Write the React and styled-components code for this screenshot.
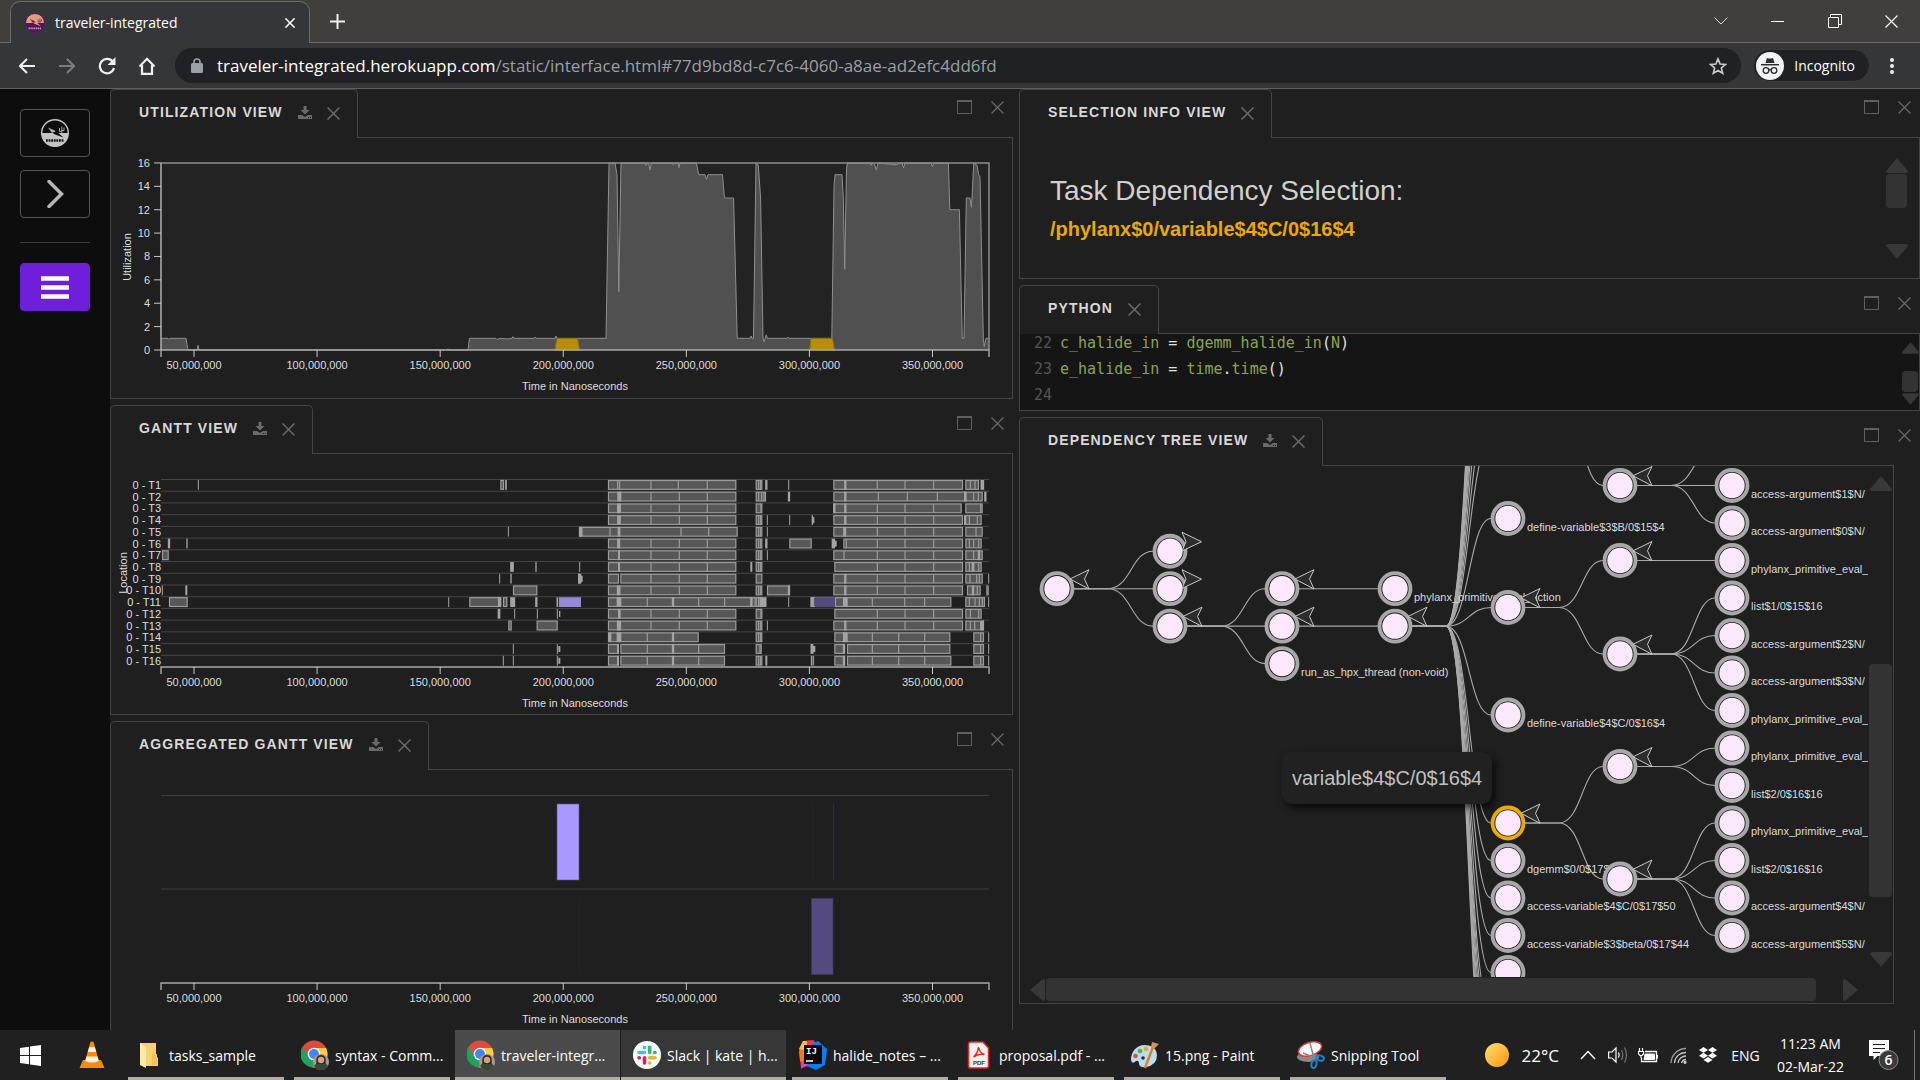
import React from "react";
import styled, { createGlobalStyle, css } from "styled-components";

const GlobalStyle = createGlobalStyle`
  * { box-sizing: border-box; }
  html, body { margin: 0; height: 100%; }
  body {
    background: #1f1f1f;
    color: #d0d0d0;
    font-family: "Liberation Sans", Arial, sans-serif;
    overflow: hidden;
  }
  button { font: inherit; color: inherit; background: none; border: 0; padding: 0; margin: 0; }
  svg { display: block; flex: none; }
`;

const uiFont = css`
  font-family: "Open Sans", "Noto Sans", sans-serif;
`;

/* ---------- page shell ---------- */

const Screen = styled.div`
  display: flex;
  flex-direction: column;
  height: 100vh;
`;

const Workspace = styled.main`
  flex: 1;
  min-height: 0;
  display: grid;
  grid-template-columns: 110px minmax(0, 1fr);
  overflow: hidden;
`;

const Panes = styled.div`
  display: grid;
  grid-template-columns: minmax(0, 903fr) minmax(0, 901fr);
  column-gap: 6px;
  min-height: 0;
  overflow: hidden;
`;

const Column = styled.div`
  display: flex;
  flex-direction: column;
  gap: 6px;
  min-height: 0;
`;

/* ---------- browser chrome ---------- */

const TabStrip = styled.header`
  ${uiFont}
  display: flex;
  align-items: stretch;
  height: 43px;
  padding-left: 10px;
  background: #403f3c;
  border-bottom: 1px solid #6b6b6a;
`;

const BrowserTab = styled.div`
  display: flex;
  align-items: center;
  width: 300px;
  margin: 1px 0 -1px;
  padding: 0 14px 0 14px;
  background: #35363a;
  border: 1px solid #6b6b6a;
  border-bottom: 0;
  border-radius: 10px 10px 0 0;
  color: #fff;
  font-size: 14px;
  gap: 10px;
`;

const TabName = styled.span`
  flex: 1;
  white-space: nowrap;
`;

const IconButton = styled.button`
  display: flex;
  align-items: center;
  justify-content: center;
  width: ${(p) => p.$w || 40}px;
`;

const StripSpace = styled.div`
  flex: 1;
`;

const Toolbar = styled.div`
  ${uiFont}
  display: flex;
  align-items: center;
  height: 46px;
  padding: 0 6px 0 7px;
  background: #35363a;
  border-bottom: 1px solid #5f6062;
`;

const AddressBar = styled.div`
  flex: 1;
  min-width: 0;
  display: flex;
  align-items: center;
  gap: 14px;
  height: 35px;
  margin: 0 12px 0 8px;
  padding: 0 14px 0 16px;
  border-radius: 18px;
  background: #202124;
`;

const Url = styled.div`
  flex: 1;
  min-width: 0;
  overflow: hidden;
  white-space: nowrap;
  font-size: 17px;
  color: #9aa0a6;
  outline: 0;
`;

const Host = styled.span`
  color: #fff;
`;

const Profile = styled.button`
  display: flex;
  align-items: center;
  gap: 10px;
  height: 33px;
  padding: 0 14px 0 2px;
  border: 1px solid #3a3b3f;
  border-radius: 17px;
  background: #202124;
  color: #fff;
  font-size: 14px;
`;

/* ---------- side bar ---------- */

const Sidebar = styled.nav`
  display: flex;
  flex-direction: column;
  align-items: center;
  padding-top: 20px;
  background: #0d0d0d;
`;

const SideButton = styled.button`
  display: flex;
  align-items: center;
  justify-content: center;
  width: 70px;
  height: 48px;
  margin-bottom: 13px;
  border: 1px solid ${(p) => (p.$primary ? "#6f1edb" : "#555")};
  border-radius: 4px;
  background: ${(p) => (p.$primary ? "#6f1edb" : "transparent")};
`;

const Divider = styled.hr`
  width: 70px;
  margin: 11px 0 20px;
  border: 0;
  border-top: 1px solid #3a3a3a;
`;

/* ---------- panels ---------- */

const PanelBox = styled.section`
  flex: none;
`;

const PanelHeader = styled.div`
  display: flex;
  align-items: flex-start;
  justify-content: space-between;
  height: 48px;
  padding-right: 9px;
`;

const PanelTab = styled.div`
  position: relative;
  z-index: 1;
  display: flex;
  align-items: center;
  gap: 15px;
  height: 49px;
  padding: 0 17px 3px 28px;
  border: 1px solid #454545;
  border-bottom: 0;
  border-radius: 5px 5px 0 0;
  background: #1f1f1f;
`;

const PanelTitle = styled.h2`
  margin: 0;
  padding-bottom: 2px;
  font-size: 14px;
  line-height: 16px;
  font-weight: 700;
  letter-spacing: 0.08em;
  text-transform: uppercase;
  white-space: nowrap;
  color: #d8d8d8;
`;

const CloseTab = styled.button`
  padding-top: 2px;
`;

const PanelTools = styled.div`
  display: flex;
  gap: 19px;
  padding-top: 11px;
`;

const PanelBody = styled.div`
  height: ${(p) => (p.$h ? p.$h + "px" : "auto")};
  margin-right: ${(p) => p.$inset || 0}px;
  border: 1px solid #454545;
  background: ${(p) => p.$bg || "#1f1f1f"};
`;

const Drawing = styled.svg`
  width: 100%;
  height: auto;
  font-family: "Liberation Sans", Arial, sans-serif;
  font-size: 11px;
`;

/* ---------- scroll bars ---------- */

const VBar = styled.div`
  display: flex;
  flex-direction: column;
  align-items: center;
  width: ${(p) => p.$w}px;
  padding: ${(p) => p.$pad};
`;

const HBar = styled.div`
  display: flex;
  align-items: center;
  height: 26px;
  padding: 0 10px 1px 10px;
`;

const Space = styled.div`
  flex: ${(p) => p.$grow} 0 0;
`;

const Thumb = styled.div`
  flex: ${(p) => p.$grow} 0 0;
  align-self: stretch;
  margin: 1px;
  border-radius: 4px;
  background: #333;
`;

/* ---------- selection info ---------- */

const SelectionBody = styled(PanelBody)`
  display: flex;
  justify-content: space-between;
`;

const SelectionText = styled.div`
  padding: 35px 0 0 30px;
`;

const SelectionTitle = styled.h1`
  margin: 0;
  font-size: 28px;
  line-height: 36px;
  font-weight: 400;
  color: #d0d0d0;
`;

const SelectionName = styled.p`
  margin: 0;
  font-size: 20px;
  line-height: 40px;
  font-weight: 700;
  color: #eaa905;
`;

/* ---------- code ---------- */

const CodeBody = styled(PanelBody)`
  display: flex;
  justify-content: space-between;
  overflow: hidden;
`;

const CodeLines = styled.pre`
  margin: -4px 0 0;
  padding: 0 0 0 14px;
  font-family: "DejaVu Sans Mono", monospace;
  font-size: 15px;
  line-height: 26px;
  color: #e0e0e0;
`;

const LineNo = styled.span`
  display: inline-block;
  width: 26px;
  color: #565656;
`;

const Name = styled.span`
  color: #8ba453;
`;

/* ---------- dependency tree ---------- */

const TreeBody = styled(PanelBody)`
  display: grid;
  grid-template-columns: minmax(0, 1fr) 25px;
  grid-template-rows: auto 26px;
`;

const Canvas = styled.div`
  position: relative;
`;

const Tooltip = styled.div`
  position: absolute;
  left: 262px;
  top: 286px;
  padding: 0 10px;
  border-radius: 10px;
  background: #212121;
  box-shadow: 3px 4px 8px rgba(0, 0, 0, 0.7);
  font-size: 20px;
  line-height: 52px;
  color: #c0c0c0;
`;

/* ---------- task bar ---------- */

const Taskbar = styled.footer`
  ${uiFont}
  flex: none;
  display: flex;
  height: 50px;
  background: #202020;
  color: #fff;
  font-size: 14px;
`;

const Task = styled.button`
  position: relative;
  display: flex;
  align-items: center;
  gap: 6px;
  width: ${(p) => (p.$bg ? 165 : 166)}px;
  margin-right: ${(p) => (p.$bg ? 1 : 0)}px;
  padding-left: 12px;
  white-space: nowrap;
  background: ${(p) => p.$bg || "transparent"};
  &::after {
    content: "";
    position: absolute;
    bottom: 0;
    height: 3px;
    left: ${(p) => (p.$bg ? 0 : 5)}px;
    right: ${(p) => (p.$bg ? 0 : 5)}px;
    background: #b3ada5;
  }
`;

const Tray = styled.div`
  display: flex;
  align-items: stretch;
  margin-left: auto;
`;

const Weather = styled.button`
  display: flex;
  align-items: center;
  gap: 13px;
  padding-right: 14px;
  font-size: 17px;
`;

const Clock = styled.time`
  width: 85px;
  padding-top: 2px;
  text-align: center;
  line-height: 23px;
  white-space: nowrap;
`;

const Language = styled.button`
  width: 45px;
`;

const ShowDesktop = styled.button`
  width: 6px;
  border-left: 1px solid #777;
`;

/* ---------- small icons ---------- */

const Cross = ({ size = 13, color = "#6a6a6a", w = 1.5 }) => (
  <svg width={size} height={size} viewBox="0 0 13 13" aria-hidden="true">
    <path d="M.5 .5 12.5 12.5M12.5 .5 .5 12.5" stroke={color} strokeWidth={w} fill="none" />
  </svg>
);

const Download = () => (
  <svg width="14" height="13" viewBox="0 0 14 13" aria-hidden="true">
    <path d="M5.5 0h3v4h3L7 8.5 2.5 4h3z" fill="#6a6a6a" />
    <path d="M0 9h4l3 2 3-2h4v4H0z" fill="#6a6a6a" />
    <path d="M10 11.5h1M12 11.5h1" stroke="#1f1f1f" />
  </svg>
);

const Maximize = () => (
  <svg width="15" height="14" viewBox="0 0 15 14" aria-hidden="true">
    <path d="M.5 1H14.5V13.5H.5z" fill="none" stroke="#606060" />
    <path d="M0 1H15" stroke="#606060" strokeWidth="2" />
  </svg>
);

const arrows = {
  up: "M11 0 22 13Q22 15 20 15H2Q0 15 0 13z",
  down: "M11 15 22 2Q22 0 20 0H2Q0 0 0 2z",
};

const Arrow = ({ dir, size = 22 }) => {
  if (dir === "left" || dir === "right") {
    return (
      <svg width="15" height="22" viewBox="0 0 15 22" aria-hidden="true">
        <path d={dir === "left" ? "M0 11 13 0Q15 0 15 2V20Q15 22 13 22z" : "M15 11 2 0Q0 0 0 2V20Q0 22 2 22z"} fill="#383838" />
      </svg>
    );
  }
  return (
    <svg width={size} height={Math.round((size * 15) / 22)} viewBox="0 0 22 15" aria-hidden="true">
      <path d={arrows[dir]} fill="#383838" />
    </svg>
  );
};

const TravelerLogo = ({ size, sky, ground, ink }) => (
  <svg width={size} height={size} viewBox="0 0 28 28" aria-hidden="true">
    <circle cx="14" cy="14" r="13.3" fill={sky} stroke={ground} strokeWidth="1.4" />
    <path d="M.7 14H27.3A13.3 13.3 0 0 1 .7 14z" fill={ground} />
    <path d="M7 8.5 14.5 12 14 14.2 11 14z" fill={ink} />
    <path d="M11 13.5 15.5 12.5 22.5 18.5 14 15.5z" fill={sky} />
    <path d="M18.5 9V12.5H20.5M20.8 7.500V14M20.8 11.5H23V8.5" stroke={ink} fill="none" strokeWidth=".9" />
    <path d="M5 21.5h18" stroke={sky} strokeWidth="2.4" strokeDasharray="1.8 .8" />
  </svg>
);

/* ---------- charts ---------- */

const PLOT_W = 828;
const TICKS = [50, 100, 150, 200, 250, 300, 350];
const timeX = (t) => 33 + ((t - 50) * 738.5) / 300;

const TimeAxis = ({ y }) => (
  <g transform={`translate(0 ${y})`}>
    <path d={`M0 7V0H${PLOT_W}V7`} fill="none" stroke="#a9a9a9" strokeWidth="1.4" />
    {TICKS.map((t) => (
      <g key={t} transform={`translate(${timeX(t)} 0)`}>
        <path d="M0 0V7" stroke="#c8c8c8" />
        <text y="19" textAnchor="middle" fill="#dedede">{`${t},000,000`}</text>
      </g>
    ))}
    <text x="414" y="40" textAnchor="middle" fill="#dedede">Time in Nanoseconds</text>
  </g>
);

const USAGE = [
  [161, 1], [168, 1], [169, 0.9], [170, 1], [186, 1], [188, 0], [197, 0], [198, 0.4], [199, 0], [447, 0], [448, 0.1], [449, 0],
  [468, 0], [469.5, 1], [496, 1], [497, 0.9], [500, 1], [508, 0.95], [512, 1], [513, 1.15], [514, 1], [534, 1], [535, 1.1], [536, 1],
  [555, 1], [556, 1.2], [557, 1], [606, 1], [609, 16], [615, 16], [617, 15], [618.8, 5], [621, 16], [645, 16], [646, 15.8], [647, 16],
  [648.6, 16], [650, 15.4], [651.4, 16], [672, 16], [673, 15.85], [674, 16], [678, 16], [679, 15.6], [680, 16], [696.4, 16], [698.7, 15],
  [705, 15], [706.5, 14.6], [708, 15], [722.5, 15], [724.4, 13], [733.6, 13], [737.2, 1], [750, 1], [751, 1.2], [752, 1], [753.5, 1],
  [756, 16], [758.3, 15.8], [760.6, 13], [763, 1], [764, 0.7], [766.2, 1.3], [767.5, 1], [787, 1], [788, 1.1], [789, 1], [831.8, 1],
  [834, 14], [835, 15], [842, 15], [843.3, 13], [844.7, 6.9], [846.5, 15.5], [847.4, 16], [870, 16], [871, 15.8], [872, 16],
  [874.5, 15.9], [876.3, 15.4], [878, 16], [896, 15.85], [900, 16], [902, 16], [903.5, 15.6], [905, 16], [931, 16], [932.4, 15.7],
  [934, 16], [948.4, 16], [949.8, 12], [959.4, 12], [962.2, 1], [964, 1], [966.3, 13], [970, 13], [971.4, 12.2], [972.3, 13.5],
  [973.7, 16], [977, 15.8], [978.7, 15], [980, 14.8], [983.3, 1], [984.2, 0.3], [986, 1], [989, 1],
];

const usageY = (v) => 187 - v * 11.69;
const usageLine = USAGE.map(([x, v]) => `${(x - 161).toFixed(1)} ${usageY(v).toFixed(1)}`).join("L");

const UtilizationChart = () => (
  <Drawing viewBox="0 0 901 260" role="img" aria-label="Utilization over time">
    <g transform="translate(50 25)">
      <rect width={PLOT_W} height="187" fill="#232323" />
      <path d={`M0 187L${usageLine}L828 187z`} fill="#505050" />
      <path d={`M${usageLine}`} fill="none" stroke="#8f8f8f" />
      <path d={`M0 0H${PLOT_W}V187`} fill="none" stroke="#8d8d8d" strokeWidth="1.5" />
      <path d="M394 187L396 175.5H416.5L418.5 187z" fill="#b88c0e" stroke="#94700c" />
      <path d="M648.8 187L650 175.5H671.5L673.5 187z" fill="#b88c0e" stroke="#94700c" />
      <path d="M0 0V187" stroke="#b0b0b0" strokeWidth="1.5" />
      {[0, 2, 4, 6, 8, 10, 12, 14, 16].map((v) => (
        <g key={v} transform={`translate(0 ${usageY(v)})`}>
          <path d="M-7 0H0" stroke="#c8c8c8" />
          <text x="-11" y="4" textAnchor="end" fill="#dedede">{v}</text>
        </g>
      ))}
      <text transform="translate(-30 94) rotate(-90)" textAnchor="middle" fill="#dedede">Utilization</text>
      <TimeAxis y={187} />
    </g>
  </Drawing>
);

/* Each row holds spans [start, end, ...dividers] and marks [centre, width],
   kept in thirds of a chart unit; the early half and the late half have their own zero. */
const FIRST = [144, 529, 177, 273, 358, 442];
const SECOND = [820, 1209, 856, 952, 1035, 1121];
const SECOND_B = [823, 1209, 952, 1035, 1121];
const BURST = [587, 607, 596, 602];
const ROWS = [
  { em: [[295, 3], [1218, 5]], eb: [[1201, 1212]], lb: [[144, 529, 173, 179, 273, 355, 442], BURST, SECOND, [1216, 1257, 1231, 1245]], lm: [[619, 7], [686, 3], [856, 7], [1267, 11]] },
  { lb: [FIRST, [587, 618, 596, 605, 612], [820, 1268, 856, 955, 1042, 1132, 1216, 1241, 1255]], lm: [[178, 12], [687, 7], [856, 7], [1216, 8], [1276, 7]] },
  { lb: [FIRST, [587, 607, 603], [820, 1205, 856, 952, 1035, 1121], [1216, 1268, 1262]], lm: [[177, 12], [823, 7], [856, 7]] },
  { lb: [FIRST, BURST, SECOND, [1216, 1265, 1228, 1252]], lm: [[177, 11], [622, 3], [689, 3], [757, 4], [760, 6, 1], [856, 7], [1215, 6]] },
  { em: [[1225, 3], [1438, 3]], lb: [[58, 533, 66, 150, 177, 363, 446], BURST, SECOND, [1216, 1268, 1248]], lm: [[62, 8], [177, 8], [622, 3], [854, 9]] },
  { em: [[207, 7], [261, 4]], lb: [FIRST, BURST, [688, 755], [850, 1209, 859, 952, 1035, 1121], [1216, 1265, 1228, 1241, 1256]], lm: [[176, 9], [619, 7], [820, 10], [826, 8, 1]] },
  { eb: [[186, 206]], lb: [FIRST, BURST, [820, 1209, 852, 952, 1035, 1121], [1216, 1268, 1241, 1257]], lm: [[177, 6], [622, 3], [1257, 7]] },
  { em: [[1236, 11], [1308, 4]], lb: [FIRST, BURST, SECOND_B, [1216, 1265, 1228, 1239, 1256]], lm: [[59, 3], [177, 6], [574, 6], [1239, 8]] },
  { em: [[1199, 3], [1233, 4], [1437, 6]], lb: [[144, 177], [181, 529, 273, 358, 442], [587, 607], SECOND, [1216, 1268, 1230, 1250, 1258]], lm: [[59, 10], [64, 8, 1], [856, 7], [1286, 3]] },
  { em: [[187, 3], [259, 6]], eb: [[1239, 1312]], lb: [FIRST, BURST, [621, 689], SECOND, [1221, 1262, 1239, 1252], [1279, 1286]], lm: [[176, 11], [687, 7], [856, 7], [1239, 7]] },
  { em: [[1046, 3], [1199, 10], [1238, 15], [1309, 7], [1372, 5]], eb: [[207, 263], [1108, 1203], [1209, 1222]], lb: [[144, 587, 177, 262, 339, 416, 494, 575], [587, 607, 596], [752, 825, 760], [825, 1174, 856, 937, 1034, 1094], [1216, 1275, 1228, 1245, 1258, 1267]], lm: [[177, 14], [339, 7], [574, 7], [609, 21], [686, 3], [756, 8], [856, 14], [1286, 3]] },
  { em: [[1197, 8], [1244, 3], [1312, 3], [1372, 3], [1379, 4, 1]], lb: [FIRST, [587, 607, 603], SECOND_B, [1216, 1265, 1231, 1256]], lm: [[178, 8]] },
  { eb: [[1225, 1235], [1310, 1373]], lb: [FIRST, BURST, SECOND, [1216, 1272, 1231, 1244, 1262]], lm: [[177, 13], [622, 3], [856, 7], [1267, 9]] },
  { lb: [[144, 416, 177, 262, 339], BURST, [823, 1171, 856, 937, 1016, 1094], [1240, 1272, 1262]], lm: [[150, 8], [177, 14], [339, 7], [856, 14], [1286, 3]] },
  { em: [[1240, 3], [1372, 3], [1378, 6, 1]], lb: [[144, 177], [181, 495, 262, 339, 416], [587, 605, 600], [823, 855], [861, 1171, 937, 1016, 1094], [1240, 1272, 1262]], lm: [[174, 6], [339, 7], [756, 9], [762, 8, 1], [852, 7], [1286, 3]] },
  { em: [[1210, 3], [1240, 3], [1372, 3], [1378, 6, 1]], lb: [[144, 177], [181, 495, 262, 339, 416], BURST, [823, 855], [861, 1174, 937, 1016, 1094], [1240, 1272, 1262]], lm: [[174, 6], [339, 7], [619, 6], [755, 5], [761, 3], [852, 7], [1286, 3]] },
];

const ROW_H = 11.72;
const early = (u) => u / 3 - 61;
const late = (u) => u / 3 + 399;

const Span = ({ at, data }) => {
  const [a, b, ...cuts] = data;
  return (
    <g stroke="#9c9c9c" strokeWidth="1.2">
      <rect x={at(a) + 0.5} y="1.5" width={at(b) - at(a) - 1} height="8.8" fill="#575757" />
      {cuts.map((c) => <path key={c} d={`M${at(c)} 1.5V10.3`} />)}
    </g>
  );
};

const Mark = ({ at, data: [c, w, short] }) => (
  <rect x={at(c) - w / 6} y={short ? 3 : 1} width={w / 3} height={short ? 6 : 9.8} fill="#a4a4a4" />
);

const GanttChart = () => (
  <Drawing viewBox="0 0 901 260" role="img" aria-label="Tasks by location over time">
    <g transform="translate(50 25)">
      {ROWS.map((row, i) => (
        <g key={i} transform={`translate(0 ${i * ROW_H})`}>
          <path d={`M0 .5H${PLOT_W}`} stroke="#464646" />
          <text x="0" y="10" textAnchor="end" fill="#dedede">{`0 - T${i + 1}`}</text>
          {(row.eb || []).map((d, k) => <Span key={k} at={early} data={d} />)}
          {(row.em || []).map((d, k) => <Mark key={k} at={early} data={d} />)}
          {(row.lb || []).map((d, k) => <Span key={k} at={late} data={d} />)}
          {(row.lm || []).map((d, k) => <Mark key={k} at={late} data={d} />)}
          {i === 10 && <rect x="398" y="1" width="22" height="9.8" fill="#9688d8" />}
          {i === 10 && <rect x="654" y="1" width="20" height="9.8" fill="#554a80" />}
        </g>
      ))}
      <text transform="translate(-34 94) rotate(-90)" textAnchor="middle" fill="#dedede">Location</text>
      <TimeAxis y={188} />
    </g>
  </Drawing>
);

const AggregatedChart = () => (
  <Drawing viewBox="0 0 901 260" role="img" aria-label="Aggregated tasks over time">
    <g transform="translate(50 25)">
      <path d={`M0 .5H${PLOT_W}M0 94H${PLOT_W}`} stroke="#3f3f3f" />
      <rect x="396" y="9" width="22" height="76" fill="#a898ff" stroke="#5c5392" strokeWidth=".6" />
      <rect x="650.5" y="103.5" width="21.5" height="76" fill="#554a80" stroke="#403960" strokeWidth=".6" />
      <path d="M672.5 9V85" stroke="#302d3e" />
      <path d="M418.5 104V179M651.5 9V85" stroke="#24232a" />
      <TimeAxis y={188} />
    </g>
  </Drawing>
);

/* ---------- dependency tree drawing ---------- */

const COL = [36, 149, 261, 374, 487, 599, 711];
const step = (n) => 121.7 + n * 37.45;
const leaf = (i) => 18.5 + i * 37.5;
const NODES = [
  { c: 0, y: step(0), open: 1 },
  { c: 1, y: step(-1), open: -1 },
  { c: 1, y: step(0), open: -1 },
  { c: 1, y: step(1), open: 1 },
  { c: 2, y: step(0), open: 1 },
  { c: 2, y: step(1), open: 1 },
  { c: 2, y: step(2), label: "run_as_hpx_thread (non-void)" },
  { c: 3, y: step(0), label: "phylanx_primitive_eval_action" },
  { c: 3, y: step(1), open: 1 },
  { c: 4, y: 51.5, label: "define-variable$3$B/0$15$4" },
  { c: 4, y: 140.5, open: 1 },
  { c: 4, y: 248, label: "define-variable$4$C/0$16$4" },
  { c: 4, y: 356, open: 1, picked: true },
  { c: 4, y: 393.5, label: "dgemm$0/0$17$11" },
  { c: 4, y: 431, label: "access-variable$4$C/0$17$50" },
  { c: 4, y: 468.5, label: "access-variable$3$beta/0$17$44" },
  { c: 4, y: 505.5, label: "access-variable$2$B/0$17$41" },
  { c: 5, y: 18.5, open: 1 },
  { c: 5, y: 93.5, open: 1 },
  { c: 5, y: 187, open: 1 },
  { c: 5, y: 299.5, open: 1 },
  { c: 5, y: 412, open: 1 },
  ...[
    "access-argument$1$N/", "access-argument$0$N/", "phylanx_primitive_eval_", "list$1/0$15$16",
    "access-argument$2$N/", "access-argument$3$N/", "phylanx_primitive_eval_", "phylanx_primitive_eval_",
    "list$2/0$16$16", "phylanx_primitive_eval_", "list$2/0$16$16", "access-argument$4$N/", "access-argument$5$N/",
  ].map((label, i) => ({ c: 6, y: leaf(i), label })),
];

const LINKS = [
  [0, step(0), step(-1)], [0, step(0), step(0)], [0, step(0), step(1)],
  [1, step(1), step(0)], [1, step(1), step(1)], [1, step(1), step(2)],
  [2, step(0), step(0)], [2, step(1), step(1)],
  ...[51.5, 140.5, 248, 356, 393.5, 431, 468.5, 505.5, 543, 562, 581, 600, 618, 637, 656,
    -24, -61, -99, -136, -165, -190, -211, -232, -253, -274, -293].map((y) => [3, step(1), y]),
  [4, -60, 18.5], [4, 140.5, 93.5], [4, 140.5, 187], [4, 356, 299.5], [4, 356, 412],
  [5, 18.5, -19], [5, 18.5, leaf(0)], [5, 18.5, leaf(1)], [5, 93.5, leaf(2)],
  [5, 187, leaf(3)], [5, 187, leaf(4)], [5, 187, leaf(5)], [5, 187, leaf(6)],
  [5, 299.5, leaf(7)], [5, 299.5, leaf(8)],
  [5, 412, leaf(9)], [5, 412, leaf(10)], [5, 412, leaf(11)], [5, 412, leaf(12)],
];

const linkPath = ([c, y0, y1]) => {
  const x = COL[c];
  const end = COL[c + 1] - 17;
  const mid = x + 74;
  return `M${x + 17} ${y0}H${x + 51}C${mid} ${y0} ${mid} ${y1} ${end} ${y1}`;
};

const Node = ({ node }) => (
  <g transform={`translate(${COL[node.c]} ${node.y})`}>
    <circle r="15.5" fill="#1f1f1f" stroke={node.picked ? "#eaa905" : "#a8a8a8"} strokeWidth="3.8" />
    <circle r="12.7" fill="#fde8ff" />
    {node.open === 1 && <path d="M13 -9.7 32 -19 27.5 -9.7 32 .3z" fill="#2c2c2c" stroke="#c8c8c8" />}
    {node.open === -1 && <path d="M12 -19 31.5 -9.5 12 -.3 16 -9.5z" fill="#2c2c2c" stroke="#c8c8c8" />}
  </g>
);

const DependencyTree = () => (
  <Drawing viewBox="0 0 848 511" role="img" aria-label="Dependency tree">
    <g transform="translate(1 1)">
      <g fill="none" stroke="#aaa" strokeWidth="1.1">
        {LINKS.map((l, i) => <path key={i} d={linkPath(l)} />)}
      </g>
      <g fill="#dadada">
        {NODES.filter((n) => n.label).map((n, i) => (
          <text key={i} x={COL[n.c] + 19} y={n.y + 12}>{n.label}</text>
        ))}
      </g>
      {NODES.map((n, i) => <Node key={i} node={n} />)}
    </g>
  </Drawing>
);

/* ---------- panel ---------- */

const Panel = ({ title, download, children }) => (
  <PanelBox>
    <PanelHeader>
      <PanelTab>
        <PanelTitle>{title}</PanelTitle>
        {download && <button aria-label="Download"><Download /></button>}
        <CloseTab aria-label={`Close ${title}`}><Cross /></CloseTab>
      </PanelTab>
      <PanelTools>
        <button aria-label="Maximize"><Maximize /></button>
        <button aria-label="Close"><Cross w={1.2} /></button>
      </PanelTools>
    </PanelHeader>
    {children}
  </PanelBox>
);

/* ---------- task bar icons ---------- */

const ChromeIcon = () => (
  <svg width="28" height="30" viewBox="0 0 28 30" aria-hidden="true">
    <circle cx="13" cy="14" r="13.5" fill="#dd4b3e" />
    <path d="M1.3 7.3 A13.5 13.5 0 0 0 12 27.5L18 17 8 17z" fill="#1da261" />
    <path d="M13 8H25A13.5 13.5 0 0 1 12 27.5L18.5 17z" fill="#ffcd40" />
    <circle cx="13" cy="14" r="6.3" fill="#fff" />
    <circle cx="13" cy="14" r="5" fill="#4285f4" />
    <circle cx="20" cy="22" r="8" fill="#a89a8a" />
    <path d="M13 26Q16 22 20 22T27 26A8 8 0 0 1 13 26z" fill="#39463c" />
    <path d="M15.5 24Q14 15 20 15T24.5 24z" fill="#33241f" />
    <circle cx="20" cy="20" r="3.2" fill="#d3a186" />
  </svg>
);

const FolderIcon = () => (
  <svg width="28" height="28" viewBox="0 0 28 28" aria-hidden="true">
    <path d="M5 2H21V15L23 17V25H8z" fill="#f6d272" />
    <path d="M5 2 11 6V27L5 24z" fill="#ffe9a6" />
    <path d="M17 13H22V24H17z" fill="#f0c35a" />
  </svg>
);

const SlackIcon = () => (
  <svg width="28" height="28" viewBox="0 0 28 28" aria-hidden="true">
    <circle cx="14" cy="14" r="14" fill="#fff" />
    <g strokeWidth="3.6" strokeLinecap="round">
      <path d="M6 11.5H11.5M11.5 6.3V6.6" stroke="#36c5f0" />
      <path d="M16.7 6.3V11.5M22 11.5H21.7" stroke="#2eb67d" />
      <path d="M22 16.7H16.7M16.7 22V21.7" stroke="#ecb22e" />
      <path d="M11.5 22V16.7M6 16.7H6.3" stroke="#e01e5a" />
    </g>
  </svg>
);

const IdeaIcon = () => (
  <svg width="28" height="30" viewBox="0 0 28 30" aria-hidden="true">
    <path d="M0 9 4 1 14 0 18 4 16 24 2 28z" fill="#fe315d" />
    <path d="M0 9 4 1 8 1 8 12z" fill="#f9c340" />
    <path d="M14 3 19 1 28 9 26 25 17 30 8 26z" fill="#087cfa" />
    <path d="M0 11 6 9 6 24 1 21z" fill="#f97a12" />
    <path d="M2 29 10 23 4 20z" fill="#c14bd8" />
    <rect x="5" y="5" width="18" height="19" fill="#100408" />
    <text x="7" y="14" fontSize="9" fontWeight="700" fill="#fff" fontFamily="Liberation Mono, monospace">IJ</text>
    <path d="M7 21H14" stroke="#fff" strokeWidth="1.5" />
  </svg>
);

const PdfIcon = () => (
  <svg width="28" height="28" viewBox="0 0 28 28" aria-hidden="true">
    <path d="M6 1H18L23.5 7V25Q23.5 27 21.5 27H5Q3.5 27 3.5 25V3Q3.5 1 6 1z" fill="#f7f3f2" stroke="#e8281e" strokeWidth="1.5" />
    <path d="M8.5 16Q13 12 13.5 6Q14.5 12 19.5 13.5Q13 12.5 8.5 16z" fill="none" stroke="#e8281e" strokeWidth="1.5" />
    <text x="8" y="24" fontSize="6" fontWeight="700" fill="#333" fontFamily="Liberation Sans, sans-serif">PDF</text>
  </svg>
);

const PaintIcon = () => (
  <svg width="28" height="28" viewBox="0 0 28 28" aria-hidden="true">
    <path d="M14 4C5 4 0 11 0 19Q1 24 5 20 8 19 8 23 9 27 15 26 26 24 26 14 25 4 14 4z" fill="#b9dcf0" />
    <circle cx="4.5" cy="15" r="2.3" fill="#e0503f" />
    <circle cx="9" cy="10" r="2.3" fill="#4fb54a" />
    <circle cx="15" cy="8" r="2.3" fill="#f5a623" />
    <circle cx="12" cy="17" r="1.8" fill="#1f3540" />
    <path d="M14 27 22 6" stroke="#d9822b" strokeWidth="2.4" />
    <path d="M21 1 28 3 23 8 20 6z" fill="#c99655" />
  </svg>
);

const SnipIcon = () => (
  <svg width="28" height="28" viewBox="0 0 28 28" aria-hidden="true">
    <ellipse cx="11" cy="16" rx="11" ry="5" fill="#8a8a8a" />
    <ellipse cx="13" cy="8" rx="12" ry="6.5" fill="#fff" stroke="#d93a3a" strokeWidth="1.5" transform="rotate(-18 13 8)" />
    <path d="M13 2 17 17M6 12 18 17" stroke="#888" strokeWidth="1.5" />
    <g fill="none" stroke="#1583cf" strokeWidth="2">
      <ellipse cx="23" cy="17" rx="4" ry="2.5" transform="rotate(20 23 17)" />
      <ellipse cx="17" cy="23" rx="2.5" ry="4" transform="rotate(15 17 23)" />
    </g>
  </svg>
);

const TASKS = [
  { icon: FolderIcon, text: "tasks_sample" },
  { icon: ChromeIcon, text: "syntax - Comm..." },
  { icon: ChromeIcon, text: "traveler-integr...", bg: "#4b4b4b" },
  { icon: SlackIcon, text: "Slack | kate | h...", bg: "#373737" },
  { icon: IdeaIcon, text: "halide_notes – ..." },
  { icon: PdfIcon, text: "proposal.pdf - ..." },
  { icon: PaintIcon, text: "15.png - Paint" },
  { icon: SnipIcon, text: "Snipping Tool" },
];

/* ---------- page ---------- */

export default function App() {
  return (
    <Screen>
      <GlobalStyle />
      <TabStrip>
        <BrowserTab>
          <TravelerLogo size={20} sky="#e79a7c" ground="#4a1766" ink="#6b1f4f" />
          <TabName>traveler-integrated</TabName>
          <button aria-label="Close tab"><Cross size={10} color="#fff" w={2} /></button>
        </BrowserTab>
        <IconButton $w={54} aria-label="New tab">
          <svg width="15" height="15" viewBox="0 0 15 15"><path d="M7.5 0V15M0 7.5H15" stroke="#eee" strokeWidth="2" /></svg>
        </IconButton>
        <StripSpace />
        <IconButton $w={57} aria-label="Search tabs">
          <svg width="14" height="8" viewBox="0 0 14 8"><path d="M.5 .5 7 7 13.5 .5" stroke="#ddd" fill="none" /></svg>
        </IconButton>
        <IconButton $w={57} aria-label="Minimize">
          <svg width="13" height="14" viewBox="0 0 13 14"><path d="M0 7.5H13" stroke="#fff" /></svg>
        </IconButton>
        <IconButton $w={57} aria-label="Restore">
          <svg width="14" height="14" viewBox="0 0 14 14"><path d="M.5 3.5H10.5V13.5H.5zM2.5 3V.5H13.5V10.5H11" fill="none" stroke="#fff" /></svg>
        </IconButton>
        <IconButton $w={57} aria-label="Close window"><Cross color="#fff" w={1.2} /></IconButton>
      </TabStrip>

      <Toolbar>
        <IconButton aria-label="Back">
          <svg width="16" height="16" viewBox="0 0 16 16"><path d="M16 8H1.5M8 1 1 8 8 15" stroke="#f1f1f1" strokeWidth="2" fill="none" /></svg>
        </IconButton>
        <IconButton aria-label="Forward">
          <svg width="16" height="16" viewBox="0 0 16 16"><path d="M0 8H14.5M8 1 15 8 8 15" stroke="#7d7e81" strokeWidth="2" fill="none" /></svg>
        </IconButton>
        <IconButton aria-label="Reload">
          <svg width="18" height="18" viewBox="0 0 18 18">
            <path d="M15 5A7.2 7.2 0 1 0 16 11" stroke="#f1f1f1" strokeWidth="2.2" fill="none" />
            <path d="M17.5 0V8H9.5z" fill="#f1f1f1" />
          </svg>
        </IconButton>
        <IconButton aria-label="Home">
          <svg width="18" height="18" viewBox="0 0 18 18"><path d="M1.5 9.5 9 1.8 16.5 9.5M4 8V16.8H14V8" stroke="#f1f1f1" strokeWidth="2.2" fill="none" /></svg>
        </IconButton>
        <AddressBar>
          <svg width="12" height="15" viewBox="0 0 12 15">
            <rect y="5" width="12" height="10" rx="1.5" fill="#9aa0a6" />
            <path d="M3 6V4A3 3 0 0 1 9 4V6" stroke="#9aa0a6" strokeWidth="1.6" fill="none" />
          </svg>
          <Url role="textbox" aria-label="Address" contentEditable suppressContentEditableWarning spellCheck={false}>
            <Host>traveler-integrated.herokuapp.com</Host>/static/interface.html#77d9bd8d-c7c6-4060-a8ae-ad2efc4dd6fd
          </Url>
          <button aria-label="Bookmark">
            <svg width="18" height="18" viewBox="0 0 24 24"><path d="M12 2.5 14.8 9.3 22 9.9 16.5 14.6 18.2 21.7 12 17.9 5.8 21.7 7.5 14.6 2 9.9 9.2 9.3z" fill="none" stroke="#c9cbce" strokeWidth="2.2" /></svg>
          </button>
        </AddressBar>
        <Profile>
          <svg width="28" height="28" viewBox="0 0 28 28">
            <circle cx="14" cy="14" r="14" fill="#f1f3f4" />
            <path d="M9.5 11 11 6Q14 7 17 6L18.5 11z" fill="#2b2c30" />
            <path d="M5 12.7H23" stroke="#2b2c30" strokeWidth="1.5" />
            <g fill="none" stroke="#2b2c30" strokeWidth="1.3">
              <circle cx="10" cy="18.5" r="2.8" /><circle cx="18" cy="18.5" r="2.8" /><path d="M12.8 18Q14 17 15.2 18" />
            </g>
          </svg>
          Incognito
        </Profile>
        <IconButton $w={44} aria-label="Menu">
          <svg width="4" height="16" viewBox="0 0 4 16" fill="#eee"><circle cx="2" cy="2" r="2" /><circle cx="2" cy="8" r="2" /><circle cx="2" cy="14" r="2" /></svg>
        </IconButton>
      </Toolbar>

      <Workspace>
        <Sidebar>
          <SideButton aria-label="Traveler">
            <TravelerLogo size={28} sky="#0d0d0d" ground="#c4c4c4" ink="#b8b8b8" />
          </SideButton>
          <SideButton aria-label="Expand">
            <svg width="17" height="28" viewBox="0 0 17 28"><path d="M2 1.5 14.5 14 2 26.5" fill="none" stroke="#b8b8b8" strokeWidth="3.5" strokeLinecap="round" /></svg>
          </SideButton>
          <Divider />
          <SideButton $primary aria-label="Views">
            <svg width="28" height="23" viewBox="0 0 28 23"><path d="M0 2.5H28M0 11.5H28M0 20.5H28" stroke="#fff" strokeWidth="4.6" /></svg>
          </SideButton>
        </Sidebar>

        <Panes>
          <Column>
            <Panel title="Utilization View" download>
              <PanelBody><UtilizationChart /></PanelBody>
            </Panel>
            <Panel title="Gantt View" download>
              <PanelBody><GanttChart /></PanelBody>
            </Panel>
            <Panel title="Aggregated Gantt View" download>
              <PanelBody><AggregatedChart /></PanelBody>
            </Panel>
          </Column>

          <Column>
            <Panel title="Selection Info View">
              <SelectionBody $h={142}>
                <SelectionText>
                  <SelectionTitle>Task Dependency Selection:</SelectionTitle>
                  <SelectionName>/phylanx$0/variable$4$C/0$16$4</SelectionName>
                </SelectionText>
                <VBar $w={45} $pad="20px 11px 19px" aria-hidden="true">
                  <Arrow dir="up" />
                  <Thumb $grow={35} />
                  <Space $grow={36} />
                  <Arrow dir="down" />
                </VBar>
              </SelectionBody>
            </Panel>
            <Panel title="Python">
              <CodeBody $h={78} $bg="#151515">
                <CodeLines>
                  <LineNo>22</LineNo><Name>c_halide_in</Name>{" = "}<Name>dgemm_halide_in</Name>(<Name>N</Name>){"\n"}
                  <LineNo>23</LineNo><Name>e_halide_in</Name>{" = "}<Name>time</Name>.<Name>time</Name>(){"\n"}
                  <LineNo>24</LineNo>
                </CodeLines>
                <VBar $w={18} $pad="8px 0 5px" aria-hidden="true">
                  <Arrow dir="up" size={17} />
                  <Space $grow={16} />
                  <Thumb $grow={21} />
                  <Arrow dir="down" size={17} />
                </VBar>
              </CodeBody>
            </Panel>
            <Panel title="Dependency Tree View" download>
              <TreeBody $inset={26}>
                <Canvas>
                  <DependencyTree />
                  <Tooltip role="tooltip">variable$4$C/0$16$4</Tooltip>
                </Canvas>
                <VBar $w={25} $pad="10px 0" aria-hidden="true">
                  <Arrow dir="up" />
                  <Space $grow={173} />
                  <Thumb $grow={234} />
                  <Space $grow={54} />
                  <Arrow dir="down" />
                </VBar>
                <HBar aria-hidden="true">
                  <Arrow dir="left" />
                  <Thumb $grow={772} />
                  <Space $grow={26} />
                  <Arrow dir="right" />
                </HBar>
              </TreeBody>
            </Panel>
          </Column>
        </Panes>
      </Workspace>

      <Taskbar>
        <IconButton $w={60} aria-label="Start">
          <svg width="21" height="21" viewBox="0 0 21 21" fill="#fff"><path d="M0 3 9 1.8V10H0zM10 1.6 21 0V10H10zM0 11H9V19.2L0 18zM10 11H21V21L10 19.4z" /></svg>
        </IconButton>
        <IconButton $w={63} aria-label="VLC">
          <svg width="26" height="28" viewBox="0 0 26 28">
            <path d="M4 19H22L25.5 27H.5z" fill="#f28c0f" />
            <path d="M11.5 1Q13 0 14.5 1L20.5 22Q13 26 5.5 22z" fill="#ff8b00" />
            <path d="M10.2 6H15.8L17.2 11H8.8zM7.5 15.5H18.5L19.8 20Q13 23 6.2 20z" fill="#f3f1ee" />
          </svg>
        </IconButton>
        {TASKS.map(({ icon: Icon, text, bg }) => (
          <Task key={text} $bg={bg}><Icon />{text}</Task>
        ))}
        <Tray>
          <Weather aria-label="Weather">
            <svg width="24" height="24" viewBox="0 0 24 24">
              <defs><linearGradient id="sun" x1="0" y1="0" x2="1" y2="1"><stop offset="0" stopColor="#ffe070" /><stop offset="1" stopColor="#ff9410" /></linearGradient></defs>
              <circle cx="12" cy="12" r="12" fill="url(#sun)" />
            </svg>
            22°C
          </Weather>
          <IconButton $w={30} aria-label="Hidden icons">
            <svg width="16" height="10" viewBox="0 0 16 10"><path d="M1 9 8 1.5 15 9" fill="none" stroke="#fff" strokeWidth="1.4" /></svg>
          </IconButton>
          <IconButton $w={30} aria-label="Volume">
            <svg width="20" height="18" viewBox="0 0 20 18" fill="none">
              <path d="M.6 6H4L8 2V16L4 12H.6z" stroke="#fff" strokeWidth="1.2" />
              <path d="M10.5 6.5Q12 9 10.5 11.5" stroke="#fff" strokeWidth="1.2" />
              <path d="M13.5 4Q16 9 13.5 14M16.5 1.5Q20.5 9 16.5 16.5" stroke="#777" strokeWidth="1.2" />
            </svg>
          </IconButton>
          <IconButton $w={30} aria-label="Battery">
            <svg width="20" height="15" viewBox="0 0 20 15" fill="none" stroke="#fff">
              <path d="M7 3.5H18.500V13.5H3.5V10" strokeWidth="1.3" />
              <path d="M7 6H16.5V11.5H6z" fill="#fff" />
              <path d="M1.5 0V3M4.5 0V3M.5 3.5H5.5V6L4 7.5H2L.5 6zM3 7.5V10" strokeWidth="1.2" />
              <path d="M19.5 7V10.5" />
            </svg>
          </IconButton>
          <IconButton $w={30} aria-label="Network">
            <svg width="17" height="17" viewBox="0 0 17 17" fill="none" stroke="#c8c8c8" strokeWidth="1.3">
              <path d="M1 16A15 15 0 0 1 16 1.5" stroke="#999" /><path d="M4.5 16A11 11 0 0 1 16 5.5M8 16A8 8 0 0 1 16 9" /><path d="M11.5 16A5 5 0 0 1 16 12.5" /><circle cx="15" cy="15.3" r="1" fill="#fff" />
            </svg>
          </IconButton>
          <IconButton $w={30} aria-label="Dropbox">
            <svg width="18" height="16" viewBox="0 0 18 16" fill="#fff"><path d="M4.5 0 9 2.9 4.5 5.8 0 2.9zM13.5 0 18 2.9 13.5 5.8 9 2.9zM4.5 5.8 9 8.7 4.5 11.6 0 8.7zM13.5 5.8 18 8.7 13.5 11.6 9 8.7zM9 10 13.5 12.9 9 15.8 4.5 12.9z" /></svg>
          </IconButton>
          <Language>ENG</Language>
          <Clock>11:23 AM<br />02-Mar-22</Clock>
          <IconButton $w={61} aria-label="6 notifications">
            <svg width="32" height="30" viewBox="0 0 32 30">
              <path d="M1 0H21V16H9.5L5.5 20V16H1z" fill="#fff" />
              <path d="M5 4.5H17M5 8.5H17M5 12.5H12" stroke="#202020" strokeWidth="1.2" />
              <circle cx="20.5" cy="20" r="9.5" fill="#3a3a3a" stroke="#8a8a8a" />
              <text x="20.5" y="25" textAnchor="middle" fontSize="14" fontWeight="600" fill="#fff">6</text>
            </svg>
          </IconButton>
          <ShowDesktop aria-label="Show desktop" />
        </Tray>
      </Taskbar>
    </Screen>
  );
}
